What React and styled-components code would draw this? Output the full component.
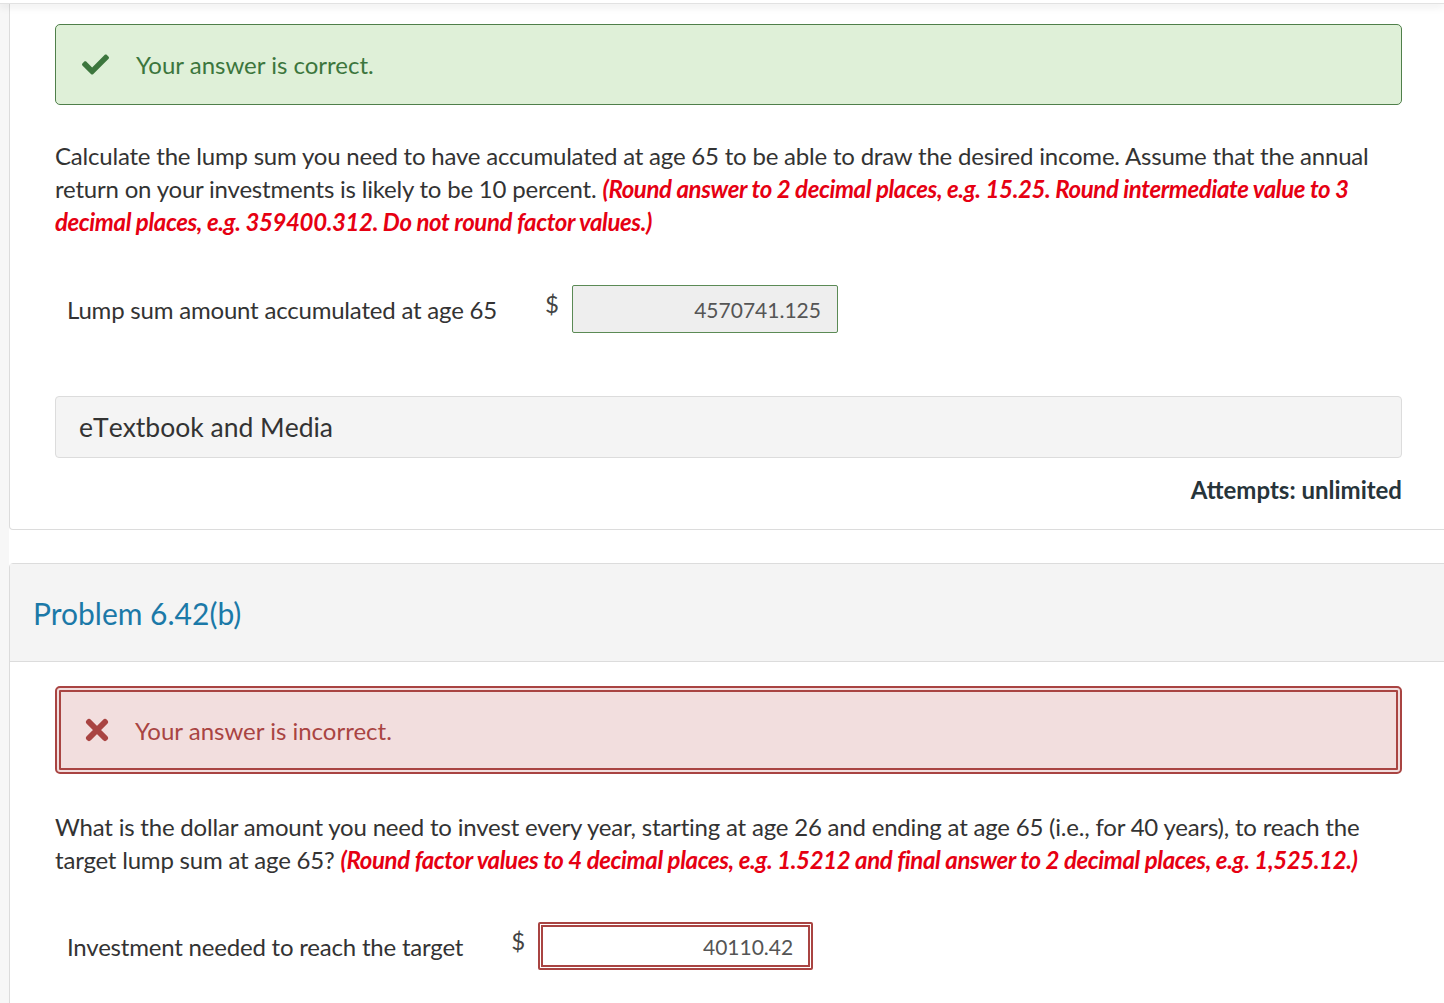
import React from "react";
import styled, { createGlobalStyle } from "styled-components";
import { FaCheck } from "react-icons/fa";

const Global = createGlobalStyle`
  html, body { margin: 0; padding: 0; background: #fff; overflow: hidden; }
  body {
    font-family: Lato, "Open Sans", Arial, sans-serif;
    color: #333;
  }
  * { box-sizing: border-box; }
`;

const Page = styled.div`
  position: relative;
  width: 1444px;
  height: 1003px;
  overflow: hidden;
`;

const TopBar = styled.div`
  position: relative;
  z-index: 2;
  height: 4px;
  background: #fff;
  border-bottom: 1px solid #e2e2e2;
  box-shadow: 0 2px 8px rgba(0, 0, 0, 0.12);
`;

const Body = styled.div`
  display: flex;
  min-height: 999px;
`;

const Strip = styled.div`
  width: 9px;
  flex: none;
  background: #f7f7f7;
`;

const Main = styled.div`
  flex: 1;
  margin-right: -4px;
  display: flex;
  flex-direction: column;
  gap: 33px;
`;

const Card = styled.section`
  border: 1px solid #dcdcdc;
  border-top: ${(p) => (p.$open ? "none" : "1px solid #dcdcdc")};
  border-radius: ${(p) => (p.$open ? "0 0 4px 4px" : "4px 4px 0 0")};
  background: #fff;
`;

const CardHeader = styled.header`
  background: #f4f4f4;
  border-bottom: 1px solid #dcdcdc;
  height: 98px;
  display: flex;
  align-items: center;
  padding-left: 23px;
`;

const Title = styled.h2`
  margin: 0;
  font-weight: 400;
  font-size: 30px;
  color: #1b79a8;
`;

const CardBody = styled.div`
  padding: ${(p) => p.$pad || "20px 45px 0"};
`;

const Alert = styled.div`
  height: ${(p) => (p.$ok ? "81px" : "88px")};
  display: flex;
  align-items: center;
  padding-left: ${(p) => (p.$ok ? "26px" : "24px")};
  gap: ${(p) => (p.$ok ? "27px" : "26px")};
  font-size: 24px;
  border-radius: 5px;
  background: ${(p) => (p.$ok ? "#dff0d8" : "#f2dede")};
  color: ${(p) => (p.$ok ? "#3c763d" : "#a94442")};
  border: ${(p) => (p.$ok ? "1px solid #4f7f4a" : "6px double #a94442")};
  svg { flex: none; }
`;

const Question = styled.p`
  margin: ${(p) => p.$m || "34px 0 0"};
  font-size: 24px;
  line-height: 33px;
  color: #333;
  letter-spacing: -0.2px;
`;

const Hint = styled.em`
  color: #e60012;
  font-weight: 700;
  letter-spacing: -0.38px;
`;

const AnswerRow = styled.div`
  display: flex;
  align-items: center;
  margin-top: ${(p) => p.$mt};
  padding-left: 12px;
  height: 48px;
`;

const Label = styled.span`
  font-size: 24px;
  color: #333;
  letter-spacing: -0.2px;
  margin-right: 48px;
`;

const Dollar = styled.span`
  font-size: 24px;
  color: #444;
  margin-right: 13px;
  align-self: flex-start;
  margin-top: 4px;
`;

const Field = styled.div`
  width: ${(p) => p.$w};
  height: 48px;
  flex: none;
  display: flex;
  align-items: center;
  justify-content: flex-end;
  padding-right: ${(p) => (p.$bad ? "15px" : "16px")};
  font-size: 21px;
  color: #555;
  background: ${(p) => (p.$bad ? "#fff" : "#eeeeee")};
  border: ${(p) => (p.$bad ? "5px double #a94442" : "1px solid #5b8a55")};
  border-radius: 2px;
`;

const Media = styled.div`
  margin-top: 63px;
  height: 62px;
  background: #f4f4f4;
  border: 1px solid #dcdcdc;
  border-radius: 4px;
  display: flex;
  align-items: center;
  padding-left: 23px;
  font-size: 26.5px;
  font-kerning: none;
  color: #333;
`;

const Attempts = styled.div`
  text-align: right;
  font-weight: 700;
  font-size: 24px;
  color: #27343a;
  margin-top: 17px;
  padding-bottom: 25px;
`;

const Cross = () => (
  <svg width="24" height="24" viewBox="0 0 24 24" aria-hidden="true">
    <path d="M4 4 L20 20 M20 4 L4 20" stroke="#a94442" strokeWidth="6" strokeLinecap="round" fill="none" />
  </svg>
);

export default function App() {
  return (
    <Page>
      <Global />
      <TopBar />
      <Body>
        <Strip />
        <Main>
          <Card $open>
            <CardBody>
              <Alert $ok>
                <FaCheck size={27} color="#3c763d" />
                <span>Your answer is correct.</span>
              </Alert>
              <Question>
                Calculate the lump sum you need to have accumulated at age 65 to be able to draw the desired income. Assume that the annual return on your investments is likely to be 10 percent.{" "}
                <Hint>(Round answer to 2 decimal places, e.g. 15.25. Round intermediate value to 3 decimal places, e.g. 359400.312. Do not round factor values.)</Hint>
              </Question>
              <AnswerRow $mt="47px">
                <Label>Lump sum amount accumulated at age 65</Label>
                <Dollar>$</Dollar>
                <Field $w="266px">4570741.125</Field>
              </AnswerRow>
              <Media>eTextbook and Media</Media>
              <Attempts>Attempts: unlimited</Attempts>
            </CardBody>
          </Card>
          <Card>
            <CardHeader>
              <Title>Problem 6.42(b)</Title>
            </CardHeader>
            <CardBody $pad="24px 45px 40px">
              <Alert>
                <Cross />
                <span>Your answer is incorrect.</span>
              </Alert>
              <Question $m="36px 0 0">
                What is the dollar amount you need to invest every year, starting at age 26 and ending at age 65 (i.e., for 40 years), to reach the target lump sum at age 65?{" "}
                <Hint>(Round factor values to 4 decimal places, e.g. 1.5212 and final answer to 2 decimal places, e.g. 1,525.12.)</Hint>
              </Question>
              <AnswerRow $mt="46px">
                <Label>Investment needed to reach the target</Label>
                <Dollar>$</Dollar>
                <Field $w="275px" $bad>40110.42</Field>
              </AnswerRow>
            </CardBody>
          </Card>
        </Main>
      </Body>
    </Page>
  );
}
